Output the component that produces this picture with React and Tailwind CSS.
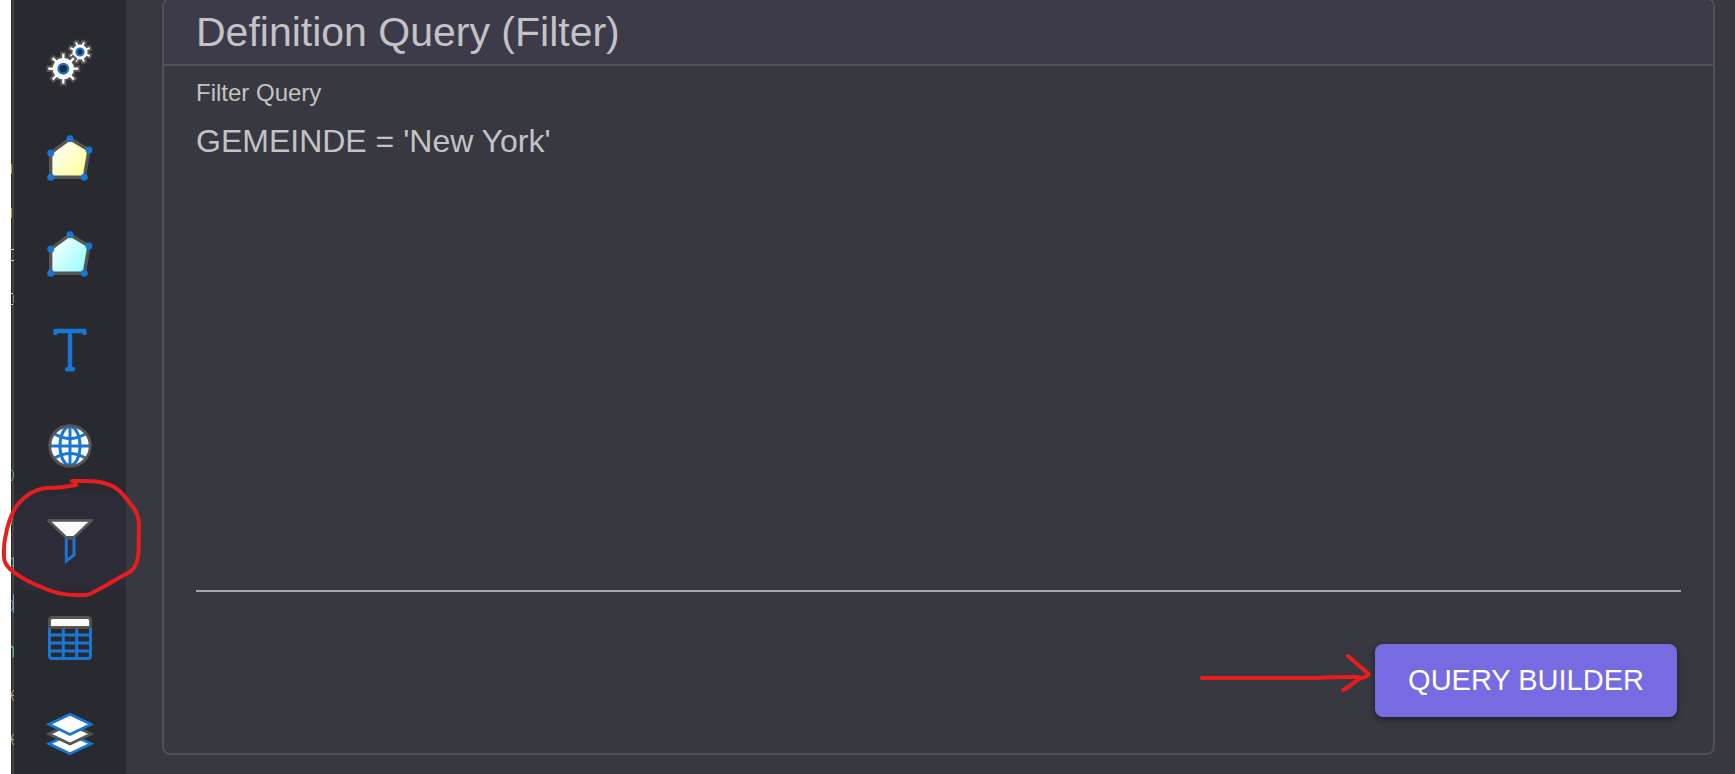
import { useId } from "react";

const BLUE = "#1976d2";
const GRAY = "#555555";

function Icon({ children }) {
  return (
    <svg viewBox="0 0 48 48" className="size-12 overflow-visible" fill="none" aria-hidden="true">
      {children}
    </svg>
  );
}

function Gear({ cx, cy, reach, body, ring, hole, tooth, turn }) {
  const angles = [0, 45, 90, 135, 180, 225, 270, 315];
  const teeth = (extra, color) =>
    angles.map((a) => (
      <line
        key={a}
        x1={cx}
        y1={cy}
        x2={cx}
        y2={cy - reach - extra}
        stroke={color}
        strokeWidth={tooth + extra * 2}
        transform={`rotate(${a + turn} ${cx} ${cy})`}
      />
    ));
  return (
    <g>
      {teeth(2, GRAY)}
      <circle cx={cx} cy={cy} r={body + 2} fill={GRAY} />
      {teeth(0, "#fafafa")}
      <circle cx={cx} cy={cy} r={body} fill="#fafafa" />
      <circle cx={cx} cy={cy} r={ring} fill={BLUE} />
      <circle cx={cx} cy={cy} r={hole} fill="#292930" />
    </g>
  );
}

function GearsIcon() {
  return (
    <Icon>
      <Gear cx={34} cy={14} reach={10.5} body={7.6} ring={4.6} hole={2.4} tooth={2} turn={22.5} />
      <Gear cx={17.3} cy={30.7} reach={15} body={10.6} ring={6} hole={3.7} tooth={2.4} turn={0} />
    </Icon>
  );
}

function PolygonIcon({ from, to }) {
  const id = useId();
  const points = [
    [24, 4.7],
    [43, 16],
    [38.3, 43.3],
    [4.7, 43.3],
    [4.7, 19],
  ];
  return (
    <Icon>
      <defs>
        <linearGradient id={id} x1="0" y1="0.15" x2="1" y2="0.9">
          <stop offset="0.1" stopColor={from} />
          <stop offset="0.9" stopColor={to} />
        </linearGradient>
      </defs>
      <polygon points={points.join(" ")} fill={`url(#${id})`} stroke={GRAY} strokeWidth="3.4" />
      {points.map(([x, y]) => (
        <circle key={`${x}-${y}`} cx={x} cy={y} r="3.5" fill={BLUE} />
      ))}
    </Icon>
  );
}

function LabelIcon() {
  return (
    <Icon>
      <g stroke={BLUE} strokeWidth="4.4" strokeLinecap="round" strokeLinejoin="round">
        <path d="M9.5 7V5H38.5V7M21 43.2H27" />
        <path d="M24 5V43" />
      </g>
    </Icon>
  );
}

function GlobeIcon() {
  return (
    <Icon>
      <circle cx="24" cy="24" r="20" fill="#fafafa" />
      <g stroke={BLUE} strokeWidth="3">
        <path d="M24 4V44M4 24H44" />
        <ellipse cx="24" cy="24" rx="10" ry="19.5" />
        <path d="M8.6 12Q24 21 39.4 12M8.6 36Q24 27 39.4 36" />
      </g>
      <circle cx="24" cy="24" r="20.3" stroke={GRAY} strokeWidth="2.9" />
    </Icon>
  );
}

function FilterIcon() {
  return (
    <Icon>
      <path d="M20.3 20V42.9L28 37V20Z" stroke={BLUE} strokeWidth="3" />
      <path
        d="M2.3 2.4H45.7L28 19.5H20Z"
        fill="#fafafa"
        stroke={GRAY}
        strokeWidth="2.8"
        strokeLinejoin="round"
      />
    </Icon>
  );
}

function TableIcon() {
  return (
    <Icon>
      <g stroke={BLUE} strokeWidth="3">
        <path d="M3.5 12V41.5Q3.5 44.5 6.5 44.5H41.5Q44.5 44.5 44.5 41.5V12" />
        <path d="M17.3 13V44M30.7 13V44M3 21H45M3 28.9H45M3 37H45" />
      </g>
      <path
        d="M3.5 13.4V6.5Q3.5 3.5 6.5 3.5H41.5Q44.5 3.5 44.5 6.5V13.4Z"
        fill="#fafafa"
        stroke={GRAY}
        strokeWidth="2.8"
      />
    </Icon>
  );
}

function LayersIcon() {
  return (
    <Icon>
      <g fill="#fff" strokeWidth="2.8">
        <path d="M24 24L45 33.8L24 43.8L3 33.8Z" stroke={BLUE} />
        <path d="M24 14.2L45 24L24 34L3 24Z" stroke={GRAY} />
        <path d="M24 4.2L45 14.3L24 24.4L3 14.3Z" stroke={BLUE} />
      </g>
    </Icon>
  );
}

const tools = [
  { name: "General", icon: <GearsIcon /> },
  { name: "Renderer", icon: <PolygonIcon from="#fffff4" to="#ffff99" /> },
  { name: "Selection", icon: <PolygonIcon from="#f4ffff" to="#99ffff" /> },
  { name: "Labels", icon: <LabelIcon /> },
  { name: "Projection", icon: <GlobeIcon /> },
  { name: "Filter", icon: <FilterIcon />, active: true },
  { name: "Fields", icon: <TableIcon /> },
  { name: "Layers", icon: <LayersIcon /> },
];

// Slice of the code editor that shows between the window edge and the dialog.
function EditorSliver() {
  return (
    <div className="w-[3px] shrink-0 border-l border-[#262626] bg-[#43433f]">
      <svg className="-ml-px h-[774px] w-[3px]" viewBox="0 0 3 774" fill="none" aria-hidden="true">
        <path d="M0 75h1M0 84h1" stroke="#7a2a2a" />
        <path d="M0.5 164v10M0.5 208v10" stroke="#b58a3c" />
        <path d="M0 249.5h3M0 260.5h3M0 293.5h2M0 304.5h2" stroke="#c9d1d0" />
        <path d="M2.5 295v8" stroke="#6b8a9a" />
        <path d="M0 470q2.5 0 2.5 5t-2.5 6" stroke="#6fa588" />
        <path d="M0 513q2.5 6 0 12M0 558q2.5 0 2.5 4t-2.5 5M2.5 557v16" stroke="#6fa588" />
        <path d="M0 600q2 0 2 5t-2 6M2.5 594v19" stroke="#6f9dbd" />
        <path d="M0 646.5q2 0 2.5 2v9" stroke="#4fb08a" strokeWidth="2" />
        <path d="M3 690q-2.5 1-2.5 5t2.5 6M0 695.5h3M3 734q-2.5 1-2.5 5t2.5 6M0 739.5h3" stroke="#c9a27a" />
      </svg>
    </div>
  );
}

function FilterHighlight() {
  return (
    <svg
      className="pointer-events-none absolute left-0 top-[476px] h-[126px] w-[146px]"
      viewBox="0 476 146 126"
      fill="none"
      aria-hidden="true"
    >
      <path
        d="M72 481C82 481 90 480.5 97 481.5C106 483 114 486 119 490.5C124 495 129 502 133 507C137 513 139 518 139 524C138.5 535 139 543 138.5 552C138 560 136 567 131 571C125 575 118 578 110 583C104 587 97 590 91 593.5C87 595.5 82 595.5 76 595C64 595 55 593 46 589C33 584 20 578 10 569C5 564 4 560 4 557C4 550 3.5 546 5 539C7 527 11 512 19 503C27 494 35 490 43 488.5C50 487.5 57 488 63 487L76 485"
        stroke="#e81e1e"
        strokeWidth="4"
        strokeLinecap="round"
        strokeLinejoin="round"
      />
    </svg>
  );
}

function Arrow() {
  return (
    <svg
      className="pointer-events-none absolute right-full top-2 mr-0.5 h-[42px] w-[174px]"
      viewBox="0 0 174 42"
      fill="none"
      aria-hidden="true"
    >
      <path
        d="M3 26H120C135 25 145 25.2 160 25M149 4L168 20.5C172 23 167 25 161 26.5C156 29 151 35 144 38"
        stroke="#e81e1e"
        strokeWidth="4"
        strokeLinecap="round"
        strokeLinejoin="round"
      />
    </svg>
  );
}

export default function App() {
  return (
    <div className="relative flex h-screen overflow-hidden bg-[#383840] pl-[11px] font-['Liberation_Sans',Arial,sans-serif] before:absolute before:inset-y-0 before:left-0 before:w-[11px] before:bg-white">
      <EditorSliver />
      <nav aria-label="Layer settings" className="flex w-28 shrink-0 flex-col bg-[#292930] pt-3.5">
        {tools.map((tool) => (
          <button
            key={tool.name}
            type="button"
            aria-label={tool.name}
            aria-pressed={Boolean(tool.active)}
            className={`flex h-24 shrink-0 items-center justify-center ${tool.active ? "bg-[#2d2b38]" : ""}`}
          >
            {tool.icon}
          </button>
        ))}
      </nav>
      <main className="min-w-0 flex-1 pl-9 pr-5">
        <section className="-mt-0.5 rounded-lg border-2 border-[#515154]">
          <h1 className="rounded-t-md border-b-2 border-[#515158] bg-[#3d3a49] px-8 py-[7px] text-[41px] leading-[50px] text-[#c3c3c6]">
            Definition Query (Filter)
          </h1>
          <div className="px-8 pb-9 pt-3">
            <label htmlFor="filter-query" className="block text-2xl leading-[30px] text-[#c3c3c5]">
              Filter Query
            </label>
            <textarea
              id="filter-query"
              spellCheck={false}
              defaultValue="GEMEINDE = 'New York'"
              className="mt-2 block h-[476px] w-full resize-none border-b-2 border-[#a6a6a6] bg-transparent pt-1.5 text-[32px] leading-[38px] text-[#c3c3c5] outline-none"
            />
            <div className="mt-13 flex justify-end pr-1">
              <div className="relative">
                <Arrow />
                <button
                  type="button"
                  className="block min-w-[302px] rounded-lg bg-[#766be0] px-8 py-4 text-[29px] leading-[41px] text-white shadow-[0_2px_6px_rgba(0,0,0,0.5)]"
                >
                  QUERY BUILDER
                </button>
              </div>
            </div>
          </div>
        </section>
      </main>
      <FilterHighlight />
    </div>
  );
}
